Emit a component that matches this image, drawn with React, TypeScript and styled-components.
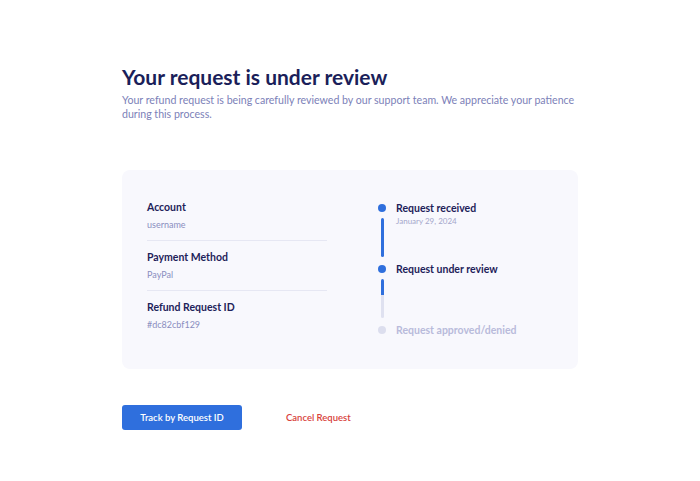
import React from 'react';
import styled, { createGlobalStyle } from 'styled-components';

const GlobalStyle = createGlobalStyle`
  body {
    margin: 0;
    background: #ffffff;
    font-family: Lato, "Noto Sans", "Liberation Sans", sans-serif;
  }
`;

const Page = styled.div`
  width: 456px;
  margin: 0 auto;
  padding-top: 63px;
`;

const Title = styled.h1`
  margin: 0;
  font-size: 21px;
  line-height: 28px;
  font-weight: 700;
  color: #1b1f5a;
`;

const Subtitle = styled.p`
  margin: 2px 0 0;
  font-size: 10.6px;
  line-height: 14px;
  color: #7c81b8;
`;

const Card = styled.div`
  margin-top: 49px;
  height: 199px;
  box-sizing: border-box;
  background: #f8f8fd;
  border-radius: 8px;
  padding: 27px 25px 0;
  display: grid;
  grid-template-columns: 180px 1fr;
  column-gap: 51px;
`;

const InfoList = styled.div`
  display: flex;
  flex-direction: column;
`;

const InfoItem = styled.div<{ $last?: boolean }>`
  padding: 3px 0 ${p => (p.$last ? '0' : '9px')};
  margin-bottom: ${p => (p.$last ? '0' : '6px')};
  border-bottom: ${p => (p.$last ? 'none' : '1px solid #e6e7f3')};
`;

const Label = styled.div`
  font-size: 10.5px;
  line-height: 14px;
  font-weight: 700;
  color: #1e2259;
`;

const Value = styled.div`
  margin-top: 5px;
  font-size: 9px;
  line-height: 12px;
  color: #8a8ebf;
`;

const Timeline = styled.div`
  display: flex;
  flex-direction: column;
  padding-top: 7px;
`;

const Step = styled.div<{ $last?: boolean }>`
  display: grid;
  grid-template-columns: 8px 1fr;
  column-gap: 10px;
  height: ${p => (p.$last ? 'auto' : '61px')};
`;

const Rail = styled.div`
  display: flex;
  flex-direction: column;
  align-items: center;
`;

const Dot = styled.div<{ $active: boolean }>`
  width: 8px;
  height: 8px;
  border-radius: 50%;
  background: ${p => (p.$active ? '#2f6fdd' : '#dcdeee')};
  flex-shrink: 0;
`;

const Line = styled.div<{ $fill: number }>`
  width: 3px;
  flex: 1;
  margin: 6px 0 8px;
  border-radius: 2px;
  background: linear-gradient(
    to bottom,
    #2f6fdd 0%,
    #2f6fdd ${p => p.$fill}%,
    #dfe1f0 ${p => p.$fill}%,
    #dfe1f0 100%
  );
`;

const StepBody = styled.div`
  margin-top: -3px;
`;

const StepTitle = styled.div<{ $muted?: boolean }>`
  font-size: 10.5px;
  line-height: 14px;
  font-weight: 700;
  color: ${p => (p.$muted ? '#b8bbdb' : '#1e2259')};
`;

const StepDate = styled.div`
  margin-top: 1px;
  font-size: 8px;
  line-height: 10px;
  color: #a4a7cb;
`;

const Actions = styled.div`
  margin-top: 36px;
  display: flex;
  align-items: center;
  gap: 44px;
`;

const PrimaryButton = styled.button`
  width: 120px;
  height: 25px;
  border: none;
  border-radius: 3px;
  background: #2f6fdd;
  color: #ffffff;
  font-family: inherit;
  font-size: 9.5px;
  font-weight: 600;
  cursor: pointer;
`;

const LinkButton = styled.button`
  border: none;
  background: none;
  padding: 0;
  color: #d8423b;
  font-family: inherit;
  font-size: 9.5px;
  font-weight: 600;
  cursor: pointer;
`;

const info = [
  { label: 'Account', value: 'username' },
  { label: 'Payment Method', value: 'PayPal' },
  { label: 'Refund Request ID', value: '#dc82cbf129' },
];

const steps = [
  { title: 'Request received', date: 'January 29, 2024', active: true, fill: 100 },
  { title: 'Request under review', active: true, fill: 40 },
  { title: 'Request approved/denied', active: false, fill: 0 },
];

const App: React.FC = () => {
  return (
    <>
      <GlobalStyle />
      <Page>
        <Title>Your request is under review</Title>
        <Subtitle>
          Your refund request is being carefully reviewed by our support team. We appreciate your patience
          during this process.
        </Subtitle>
        <Card>
          <InfoList>
            {info.map((item, i) => (
              <InfoItem key={item.label} $last={i === info.length - 1}>
                <Label>{item.label}</Label>
                <Value>{item.value}</Value>
              </InfoItem>
            ))}
          </InfoList>
          <Timeline>
            {steps.map((step, i) => {
              const last = i === steps.length - 1;
              return (
                <Step key={step.title} $last={last}>
                  <Rail>
                    <Dot $active={step.active} />
                    {!last && <Line $fill={step.fill} />}
                  </Rail>
                  <StepBody>
                    <StepTitle $muted={!step.active}>{step.title}</StepTitle>
                    {step.date && <StepDate>{step.date}</StepDate>}
                  </StepBody>
                </Step>
              );
            })}
          </Timeline>
        </Card>
        <Actions>
          <PrimaryButton>Track by Request ID</PrimaryButton>
          <LinkButton>Cancel Request</LinkButton>
        </Actions>
      </Page>
    </>
  );
};

export default App;
